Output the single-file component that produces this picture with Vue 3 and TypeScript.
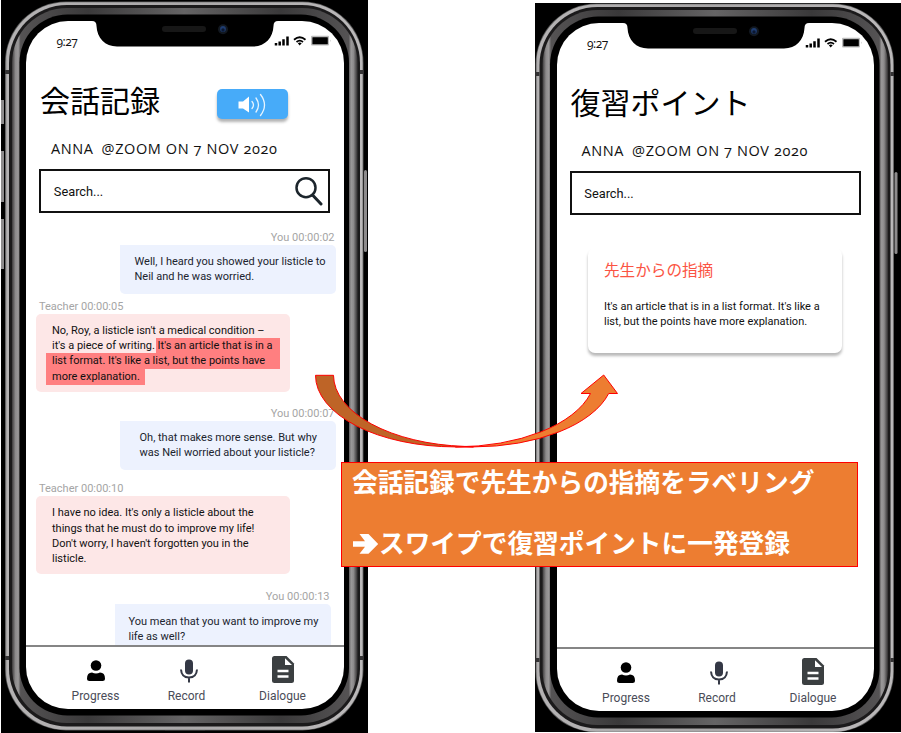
<script setup lang="ts">
interface Line {
  text: string
  marked?: string
  kind?: 'full' | 'tail'
}

interface Message {
  who: 'you' | 'teacher'
  name: string
  time: string
  variant: string
  lines: Line[]
}

interface Phone {
  id: string
  title: string
  box: string
}

const phones: Phone[] = [
  { id: 'record', title: '会話記録', box: '1 0 367 733' },
  { id: 'review', title: '復習ポイント', box: '4.5 1 366 729' },
]

const messages: Message[] = [
  {
    who: 'you',
    name: 'You',
    time: '00:00:02',
    variant: 'first',
    lines: [{ text: 'Well, I heard you showed your listicle to' }, { text: 'Neil and he was worried.' }],
  },
  {
    who: 'teacher',
    name: 'Teacher',
    time: '00:00:05',
    variant: 'second',
    lines: [
      { text: "No, Roy, a listicle isn't a medical condition –" },
      { text: "it's a piece of writing. ", marked: "It's an article that is in a" },
      { text: '', marked: "list format. It's like a list, but the points have", kind: 'full' },
      { text: '', marked: 'more explanation.', kind: 'tail' },
    ],
  },
  {
    who: 'you',
    name: 'You',
    time: '00:00:07',
    variant: 'third',
    lines: [{ text: 'Oh, that makes more sense. But why' }, { text: 'was Neil worried about your listicle?' }],
  },
  {
    who: 'teacher',
    name: 'Teacher',
    time: '00:00:10',
    variant: 'fourth',
    lines: [
      { text: "I have no idea. It's only a listicle about the" },
      { text: 'things that he must do to improve my life!' },
      { text: "Don't worry, I haven't forgotten you in the" },
      { text: 'listicle.' },
    ],
  },
  {
    who: 'you',
    name: 'You',
    time: '00:00:13',
    variant: 'fifth',
    lines: [{ text: 'You mean that you want to improve my' }, { text: 'life as well?' }],
  },
]
</script>

<template>
  <main class="stage">
    <section v-for="phone in phones" :key="phone.id" class="phone" :class="phone.id">
      <svg class="shell" :viewBox="phone.box" aria-hidden="true">
        <defs>
          <linearGradient :id="`rim-${phone.id}`" gradientUnits="userSpaceOnUse" x1="5" y1="0" x2="364" y2="0">
            <stop offset="0" stop-color="#777" />
            <stop offset="0.006" stop-color="#b4b2b3" />
            <stop offset="0.5" stop-color="#aaa8a9" />
            <stop offset="0.994" stop-color="#bbb9ba" />
            <stop offset="1" stop-color="#777" />
          </linearGradient>
          <linearGradient :id="`bevel-${phone.id}`" gradientUnits="userSpaceOnUse" x1="12" y1="0" x2="357" y2="0">
            <stop offset="0" stop-color="#3c3a3b" />
            <stop offset="0.01" stop-color="#8c8a8b" />
            <stop offset="0.018" stop-color="#9b999a" />
            <stop offset="0.025" stop-color="#555354" />
            <stop offset="0.22" stop-color="#3a393a" />
            <stop offset="0.5" stop-color="#656465" />
            <stop offset="0.78" stop-color="#3a393a" />
            <stop offset="0.976" stop-color="#555354" />
            <stop offset="0.983" stop-color="#9b999a" />
            <stop offset="0.99" stop-color="#8c8a8b" />
            <stop offset="1" stop-color="#3c3a3b" />
          </linearGradient>
        </defs>
        <rect x="0" y="0" width="372" height="734" fill="#000" />
        <path d="M1 100h3v24h-3zM1 151h3v51h-3zM1 219h3v50h-3z" fill="#8d8b8c" />
        <rect x="364" y="170" width="3" height="82" rx="1.5" fill="#8d8b8c" />
        <rect x="5" y="1.5" width="358.5" height="729" rx="61" fill="#555" />
        <rect x="5.7" y="2.2" width="357.1" height="727.6" rx="60.5" :fill="`url(#rim-${phone.id})`" />
        <rect x="9" y="5" width="351" height="721.5" rx="58" fill="#1b1a1b" />
        <rect x="12" y="8" width="345.5" height="715" rx="55" :fill="`url(#bevel-${phone.id})`" />
        <rect x="19.5" y="14.5" width="329.5" height="701" rx="48" fill="#000" />
        <path d="M5 70h4v4h-4zM360 70h3.5v4h-3.5zM5 656h4v4h-4zM360 656h3.5v4h-3.5z" fill="#343334" />
        <path d="M165 730.5h40" stroke="#333" />
      </svg>

      <div class="screen">
        <svg class="notch" viewBox="88 20 194 27" aria-hidden="true">
          <path d="M88 20V21H92Q96.5 21 96.5 26C97 38 105 46.5 117 46.5H253C265 46.5 273 38 273.5 26Q273.5 21 278 21H282V20Z" fill="#000" />
          <rect x="162" y="26" width="44" height="6" rx="3" fill="#171717" />
          <circle cx="223" cy="29.3" r="5" fill="#121820" />
          <circle cx="223" cy="29" r="2.9" fill="#1e3c70" />
          <circle cx="223" cy="30" r="1.7" fill="#0c1830" />
        </svg>

        <header class="status">
          <span class="clock">9:27</span>
          <svg class="signals" viewBox="274 35 58 12" aria-hidden="true">
            <path d="M276 43v2.5M279.7 41.5v4M283.5 39.3v6.2M287.5 36.5v9" stroke="#000" stroke-width="2.5" />
            <path d="M294 39.7Q299.7 34.8 305.5 39.7M296.5 42Q299.7 39.3 303 42" fill="none" stroke="#000" stroke-width="1.8" />
            <path d="M297.8 43.3Q299.7 41.7 301.7 43.3L299.7 45.4Z" />
            <rect x="311" y="35.8" width="18" height="9.7" rx="1" fill="#bcbcbc" />
            <rect x="312.4" y="37.2" width="15.4" height="7" rx="0.5" />
            <path d="M330.3 39.5Q331.5 40.6 330.3 42Z" fill="#aaa" />
          </svg>
        </header>

        <div class="heading">
          <h1>{{ phone.title }}</h1>
          <button v-if="phone.id === 'record'" class="speaker" type="button" aria-label="Play">
            <svg viewBox="0 0 30 24" aria-hidden="true">
              <path d="M0.5 8.5H5L11 3.5V19.5L5 15.5H0.5Z" fill="#fff" />
              <path d="M14 8.5Q17 12 14 15.5M18 5Q23 12 18 19M22.5 1.5Q30.5 12 22.5 22.5" fill="none" stroke="#e6f4ff" stroke-width="1.3" stroke-linecap="round" />
            </svg>
          </button>
        </div>

        <p class="meta"><span>ANNA</span><span>@ZOOM ON 7 NOV 2020</span></p>

        <div class="search">
          <span>Search...</span>
          <svg v-if="phone.id === 'record'" viewBox="0 0 30 30" aria-hidden="true">
            <circle cx="12" cy="11.7" r="9.5" fill="none" stroke="#1c252c" stroke-width="2.5" />
            <path d="M18.5 19L27 28" stroke="#1c252c" stroke-width="3" stroke-linecap="round" />
          </svg>
        </div>

        <div v-if="phone.id === 'record'" class="chat">
          <article v-for="m in messages" :key="m.time" class="message" :class="[m.who, m.variant]">
            <div class="stamp">{{ m.name }} {{ m.time }}</div>
            <div class="bubble">
              <div v-for="(line, i) in m.lines" :key="i" class="line"><span>{{ line.text }}</span><mark v-if="line.marked" :class="line.kind">{{ line.marked }}</mark></div>
            </div>
          </article>
        </div>

        <div v-else class="points">
          <article class="card">
            <h2>先生からの指摘</h2>
            <div class="line">It's an article that is in a list format. It's like a</div>
            <div class="line">list, but the points have more explanation.</div>
          </article>
        </div>

        <nav class="tabs">
          <div class="tab progress">
            <svg viewBox="0 0 32 32" aria-hidden="true">
              <circle cx="16" cy="10.5" r="5.3" />
              <path d="M7 23.5Q7 17.5 12 17.5Q16 19.5 20 17.5Q25 17.5 25 23.5Q25 26 22.5 26H9.5Q7 26 7 23.5Z" />
            </svg>
            <span>Progress</span>
          </div>
          <div class="tab mic">
            <svg viewBox="0 0 32 32" aria-hidden="true">
              <rect x="12" y="4.5" width="8" height="15" rx="4" fill="#343845" />
              <path d="M8 14.5Q8.5 22.5 16 22.5Q23.5 22.5 24 14.5M16 22.5V27.5" fill="none" stroke="#343845" stroke-width="2" />
            </svg>
            <span>Record</span>
          </div>
          <div class="tab file">
            <svg viewBox="0 0 32 32" aria-hidden="true">
              <path d="M7.5 1H19.5L27 8.5V25.5Q27 28 24.5 28H7.5Q5 28 5 25.5V3.5Q5 1 7.5 1Z" fill="#3b3f41" />
              <path d="M18 3.3V10H25Z" fill="#fff" />
              <path d="M10.5 16H21.5M10.5 21.5H21.5" stroke="#fff" stroke-width="2.5" />
            </svg>
            <span>Dialogue</span>
          </div>
        </nav>
      </div>
    </section>

    <svg class="swoop" viewBox="310 370 312 82" aria-hidden="true">
      <path d="M603.7 375L617.5 393.5H608.7A140 71.6 0 0 1 473.5 446.9L455.3 446.9A140 71.6 0 0 0 590.5 393.5H581Z" fill="#ed7d31" stroke="#f00" />
      <path d="M315.5 375.3H333.5A140 71.6 0 0 0 464.4 446.4L473.5 446.9L455.3 446.9A140 71.6 0 0 1 315.5 375.3Z" fill="#be6427" stroke="#f00" />
    </svg>

    <aside class="callout">
      <p>会話記録で先生からの指摘をラベリング</p>
      <p>
        <svg viewBox="0 0 26 20" aria-hidden="true">
          <path d="M0 7.3H12L6.5 0H15.5L25.2 9.9L15.5 19.8H6.5L12 12.8H0Z" fill="#fff" />
        </svg>
        <span>スワイプで復習ポイントに一発登録</span>
      </p>
    </aside>
  </main>
</template>

<style>
body {
  background: #fff;
}
</style>

<style scoped>
.stage {
  position: relative;
  display: flex;
  justify-content: space-between;
  box-sizing: border-box;
  width: 901px;
  height: 733px;
  padding-left: 1px;
  overflow: hidden;
  font-family: Roboto, 'Noto Sans CJK JP', sans-serif;
  color: #111;
}

h1,
h2,
p {
  margin: 0;
  font-weight: 400;
}

.phone {
  position: relative;
  box-sizing: border-box;
  width: 367px;
  height: 733px;
  padding: 21px 0 0 25px;
}

.phone.review {
  width: 366px;
  height: 729px;
  margin-top: 3px;
  padding: 20px 0 0 21.5px;
}

.shell {
  position: absolute;
  inset: 0;
  width: 100%;
  height: 100%;
}

.screen {
  position: relative;
  display: flex;
  flex-direction: column;
  width: 317.5px;
  height: 688px;
  overflow: hidden;
  border-radius: 42px;
  background: #fff;
}

.notch {
  position: absolute;
  left: 62px;
  top: -1px;
  width: 194px;
  height: 27px;
}

.status {
  display: flex;
  justify-content: space-between;
  height: 28px;
  padding: 14px 11.5px 0 30.5px;
}

.clock,
.meta {
  font-family: 'Open Sans', 'Noto Sans', sans-serif;
  font-variant-numeric: oldstyle-nums;
}

.clock {
  font-size: 12px;
  line-height: 14px;
  letter-spacing: -0.5px;
}

.signals {
  width: 58px;
  height: 12px;
}

.heading {
  display: flex;
  justify-content: space-between;
  height: 56px;
  padding: 16px 55.5px 0 14px;
}

.heading h1 {
  margin-top: -2px;
  font-family: 'Noto Sans CJK JP', sans-serif;
  font-size: 30px;
  line-height: 44px;
  color: #000;
}

.speaker {
  display: flex;
  justify-content: center;
  align-items: center;
  width: 71px;
  height: 30px;
  margin-top: 10px;
  padding: 0;
  border: 0;
  border-radius: 5px;
  background: #47abf9;
  box-shadow: 0 3px 3px rgba(0, 0, 0, 0.3);
}

.speaker svg {
  width: 30px;
  height: 24px;
  margin-top: 1px;
}

.meta {
  display: flex;
  gap: 8px;
  height: 31px;
  padding: 4px 0 0 25px;
  font-size: 14.5px;
  line-height: 20px;
  letter-spacing: 0.6px;
  white-space: nowrap;
}

.search {
  display: flex;
  flex: none;
  justify-content: space-between;
  align-items: center;
  box-sizing: border-box;
  width: 291px;
  height: 44px;
  margin: -1px 0 0 13.3px;
  padding: 0 4px 0 12.5px;
  border: 2px solid #111;
  font-size: 12.8px;
}

.search svg {
  width: 30px;
  height: 30px;
}

.chat {
  flex: 1;
  min-height: 0;
  overflow: hidden;
  padding-top: 17px;
}

.message.second {
  margin-top: 5px;
}

.message.third {
  margin-top: 14.2px;
}

.message.fourth {
  margin-top: 11.7px;
}

.message.fifth {
  margin-top: 15.2px;
}

.stamp {
  box-sizing: border-box;
  height: 15px;
  padding: 1px 9px 0 13px;
  font-size: 11px;
  line-height: 14px;
  color: #a5a5a5;
}

.you .stamp {
  text-align: right;
}

.fifth .stamp {
  padding-right: 14px;
}

.bubble {
  box-sizing: border-box;
  width: 253.5px;
  height: 77.5px;
  margin-left: 10px;
  padding: 8.5px 0 0 16px;
  border-radius: 5px;
  background: #fde7e7;
}

.you .bubble {
  width: 216px;
  height: 49px;
  margin-left: 94px;
  padding: 9px 0 0 14.5px;
  border-radius: 0 5px 5px 5px;
  background: #edf2fe;
  color: #20242e;
}

.you.third .bubble {
  padding: 9.3px 0 0 19.5px;
}

.fourth .bubble {
  padding-top: 9px;
}

.you.fifth .bubble {
  margin-left: 89px;
  padding: 10px 0 0 13.5px;
}

.line {
  height: 15.35px;
  font-size: 11px;
  line-height: 15.35px;
  white-space: pre;
}

mark {
  display: inline-block;
  box-sizing: border-box;
  height: 16px;
  padding: 0 7.5px 0 2px;
  margin-left: -2px;
  background: #ff7f80;
  color: inherit;
}

mark.full {
  width: 234.5px;
  margin-left: -6.5px;
  padding-left: 6.5px;
}

mark.tail {
  width: 99.5px;
  margin-left: -6.5px;
  padding-left: 6.5px;
}

.points {
  flex: 1;
}

.card {
  box-sizing: border-box;
  width: 254px;
  height: 105px;
  margin: 33px 0 0 31.5px;
  padding: 9px 0 0 16px;
  border-radius: 7px;
  box-shadow: 0 3px 3px rgba(0, 0, 0, 0.28);
}

.card h2 {
  margin-bottom: 18px;
  font-family: 'Noto Sans CJK JP', sans-serif;
  font-size: 15.6px;
  line-height: 24px;
  color: #fb5443;
}

.tabs {
  display: flex;
  flex: none;
  box-sizing: border-box;
  height: 64.5px;
  padding-left: 23px;
  border-top: 2px solid #858585;
}

.tab {
  display: flex;
  flex-direction: column;
  align-items: center;
  width: 93px;
  padding-top: 8.5px;
  font-size: 12px;
  line-height: 18px;
  color: #4a4c58;
}

.tab svg {
  width: 32px;
  height: 32px;
}

.mic span {
  margin-left: -4px;
}

.file {
  padding-left: 1px;
}

.swoop {
  position: absolute;
  left: 310px;
  top: 370px;
  width: 312px;
  height: 82px;
}

.callout {
  position: absolute;
  left: 341px;
  top: 462px;
  box-sizing: border-box;
  width: 517px;
  height: 105px;
  padding: 0 0 0 11px;
  border: 1px solid #f00;
  background: #ed7d31;
  font-family: 'Noto Sans CJK JP', sans-serif;
  color: #fff;
}

.callout p {
  display: flex;
  align-items: center;
  height: 62px;
  font-size: 25.7px;
  font-weight: 700;
  line-height: 38px;
  white-space: nowrap;
}

.callout p:first-child {
  height: 35px;
  margin: 0 0 13px -1px;
}

.callout svg {
  width: 26px;
  height: 20px;
  margin-top: 3px;
}
</style>
